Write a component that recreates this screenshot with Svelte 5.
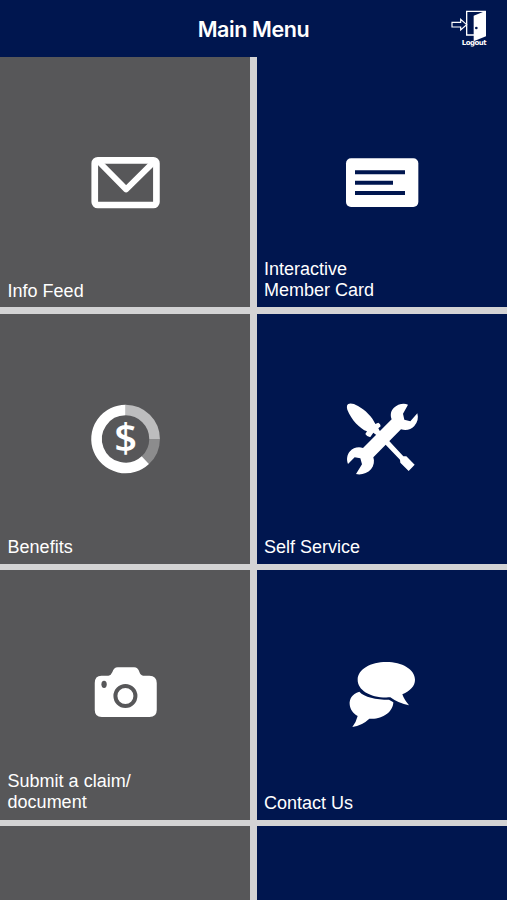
<script>
	/** @type {{ icon: string, lines: string[], view: string }[]} */
	const tiles = [
		{ icon: 'mail', lines: ['Info Feed'], view: '0.75 -25 270 270' },
		{ icon: 'card', lines: ['Interactive', 'Member Card'], view: '6 -25 270 270' },
		{ icon: 'dollar', lines: ['Benefits'], view: '0.75 -4 270 270' },
		{ icon: 'tools', lines: ['Self Service'], view: '6 -4 270 270' },
		{ icon: 'camera', lines: ['Submit a claim/', 'document'], view: '0.75 -15 270 270' },
		{ icon: 'chat', lines: ['Contact Us'], view: '6 0 270 270' },
		{ icon: '', lines: [], view: '' },
		{ icon: '', lines: [], view: '' }
	];
</script>

<div class="screen">
	<header>
		<h1>Main Menu</h1>
		<button class="logout" aria-label="Logout">
			<svg viewBox="60 26 114 120" width="38" height="40">
				<path d="M66 66h26v-9l18 16-18 16v-9H66z" fill="none" stroke="#fff" stroke-width="3.5" />
				<path d="M132 104h-22V33h57" fill="none" stroke="#fff" stroke-width="4" />
				<path d="M131 46l37-15v77l-37 15z" fill="#fff" />
				<circle cx="139" cy="83" r="4" fill="#00164f" />
				<text x="132" y="135" text-anchor="middle">Logout</text>
			</svg>
		</button>
	</header>

	<main>
		{#each tiles as tile, i}
			<div class="tile" class:navy={i % 2 === 1}>
				{#if tile.icon}
					<svg class="icon" viewBox={tile.view} width="90" height="90" fill="#fff">
						{#if tile.icon === 'mail'}
							<rect x="45" y="45" width="185" height="134" rx="9" fill="none" stroke="#fff" stroke-width="20" />
							<path d="M58 50L139 132L222 50" fill="none" stroke="#fff" stroke-width="18" stroke-linejoin="round" />
						{:else if tile.icon === 'card'}
							<rect x="33" y="39" width="217" height="146" rx="15" />
							<path d="M60 81h150M60 112h114M60 143h150" stroke="#00164f" stroke-width="12" />
						{:else if tile.icon === 'dollar'}
							<g fill="none" stroke-width="32">
								<path d="M137.500 44A87 87 0 0 1 224.500 131" stroke="#bdbdbe" />
								<path d="M224.500 131A87 87 0 0 1 196.800 194.600" stroke="#8c8c8d" />
								<path d="M196.800 194.600A87 87 0 1 1 137.500 44" stroke="#fff" />
							</g>
							<text class="dollar" x="138" y="170" text-anchor="middle">$</text>
						{:else if tile.icon === 'tools'}
							<!-- screwdriver -->
							<path d="M36 31C39 22 53 23 69 32C91 44 112 65 121 86L130 82Q137 86 137 93L130 99L134 106L205 183L214 183L239 208L221 227L196 202L195 193L124 119L115 112L106 125Q97 126 91 116L96 108C75 100 49 74 37 43Q35 36 36 31Z" />
							<!-- wrench -->
							<path d="M219 28C205 22 188 27 176 38C167 47 165 60 170 72L84 158C69 153 54 158 45 168C36 178 34 193 39 206L59 186L76 189L81 207L63 236C78 240 97 234 108 222C117 211 119 198 115 186L198 102C213 107 228 103 238 92C248 81 251 68 247 54L226 78L208 73L204 55Z" />
						{:else if tile.icon === 'camera'}
							<path d="M65 62H86Q94 61 98 51Q102 37 114 37H163Q175 37 179 51Q182 61 190 62H209Q231 63 231 84V165Q231 186 209 186H66Q45 186 45 165V84Q45 62 65 62Z" />
							<ellipse cx="73" cy="88" rx="8" ry="11" fill="#575759" />
							<circle cx="137" cy="123" r="30" fill="none" stroke="#575759" stroke-width="12" />
						{:else if tile.icon === 'chat'}
							<path d="M73 125C50 132 43 148 44 163C45 178 54 191 68 198Q64 215 52 231Q81 227 103 206C139 210 174 188 175 157L162 149C122 149 88 141 73 125Z" />
							<path d="M154 36C201 36 240 58 240 89C240 108 226 122 202 133Q207 148 222 166Q190 160 166 142C110 146 68 122 68 89C68 58 107 36 154 36Z" />
						{/if}
					</svg>
				{/if}
				<p class:double={tile.lines.length > 1}>
					{#each tile.lines as line}
						<span>{line}</span>
					{/each}
				</p>
			</div>
		{/each}
	</main>
</div>

<style>
	:global(body) {
		margin: 0;
		background: #d3d3d4;
	}
	.screen {
		display: flex;
		flex-direction: column;
		height: 900px;
		overflow: hidden;
		color: #fff;
		font-family: 'Liberation Sans', Arial, sans-serif;
	}
	header {
		display: grid;
		grid-template-columns: 1fr auto 1fr;
		flex: none;
		align-items: center;
		height: 57.400px;
		background: #00164f;
	}
	h1 {
		grid-column: 2;
		margin: 0;
		font: 600 21.500px/28px Inter, sans-serif;
		letter-spacing: -0.400px;
	}
	.logout {
		justify-self: end;
		display: flex;
		margin-right: 19px;
		padding: 0;
		border: 0;
		background: none;
	}
	.logout text {
		font: bold 21px 'DejaVu Sans', sans-serif;
		letter-spacing: -1.500px;
		fill: #fff;
	}
	main {
		display: grid;
		grid-template-columns: 250.400px 250px;
		grid-auto-rows: 250px;
		justify-content: space-between;
		row-gap: 6.300px;
	}
	.tile {
		display: grid;
		background: #575759;
	}
	.navy {
		background: #00164f;
	}
	.icon,
	p {
		grid-area: 1 / 1;
	}
	.icon {
		place-self: center;
	}
	p {
		align-self: end;
		margin: 0;
		padding: 0 7.600px 5.900px;
		font-size: 18px;
		line-height: 21px;
	}
	.tile:nth-child(-n + 2) p {
		padding-bottom: 5.400px;
	}
	.tile p.double {
		padding-bottom: 6.600px;
	}
	.navy p {
		padding-left: 7px;
	}
	span {
		display: block;
	}
	.dollar {
		font: 600 120px 'Open Sans', sans-serif;
	}
</style>
